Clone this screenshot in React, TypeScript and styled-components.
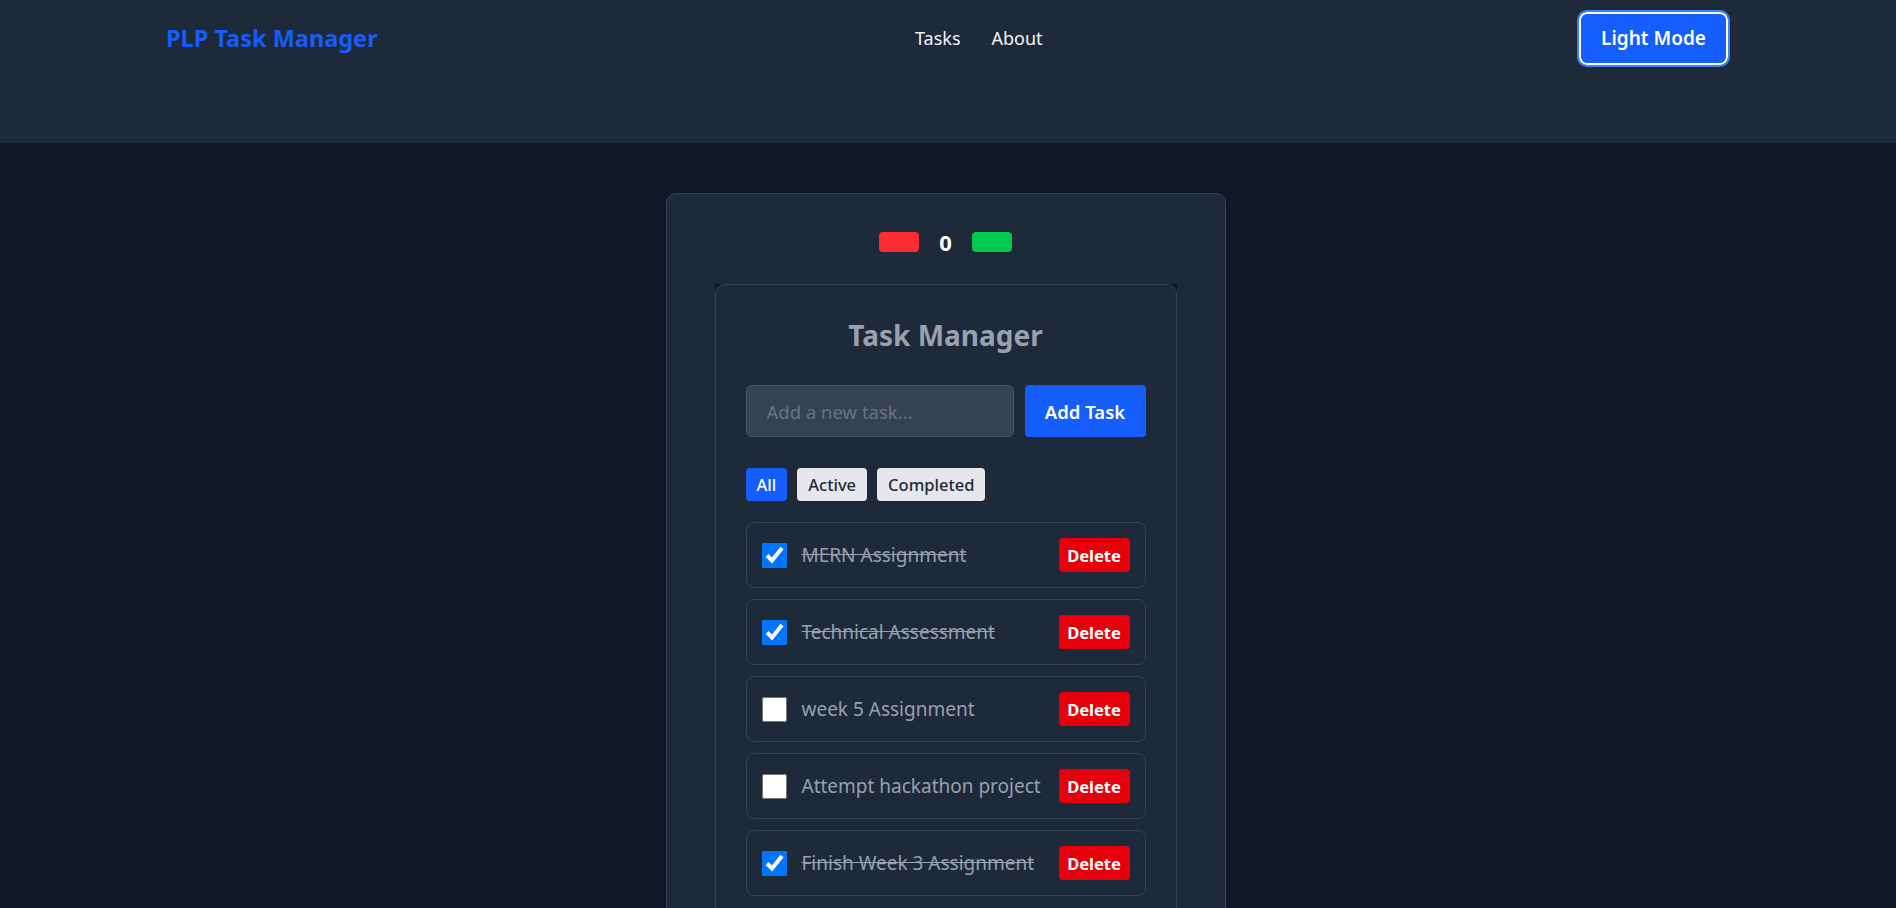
import { useState } from "react";
import styled, { createGlobalStyle } from "styled-components";

const GlobalStyle = createGlobalStyle`
	body {
		margin: 0;
		background: #101828;
		font-family: "Segoe UI", "Noto Sans", "Open Sans", sans-serif;
	}
`;

type Task = { id: number; text: string; done: boolean };

const initialTasks: Task[] = [
	{ id: 1, text: "MERN Assignment", done: true },
	{ id: 2, text: "Technical Assessment", done: true },
	{ id: 3, text: "week 5 Assignment", done: false },
	{ id: 4, text: "Attempt hackathon project", done: false },
	{ id: 5, text: "Finish Week 3 Assignment", done: true }
];

const App = () => {
	const [tasks, setTasks] = useState(initialTasks);
	const [count, setCount] = useState(0);
	const [filter, setFilter] = useState("All");
	const [draft, setDraft] = useState("");

	const shown = tasks.filter((t) => (filter === "All" ? true : filter === "Active" ? !t.done : t.done));

	const addTask = () => {
		if (!draft.trim()) return;
		setTasks([...tasks, { id: Date.now(), text: draft.trim(), done: false }]);
		setDraft("");
	};

	return (
		<>
			<GlobalStyle />
			<Header>
				<HeaderRow>
					<Logo>PLP Task Manager</Logo>
					<Nav>
						<NavLink href="#">Tasks</NavLink>
						<NavLink href="#">About</NavLink>
					</Nav>
					<ModeButton>Light Mode</ModeButton>
				</HeaderRow>
			</Header>

			<Main>
				<OuterCard>
					<Counter>
						<CountButton $color="#fb2c36" onClick={() => setCount(count - 1)} />
						<CountValue>{count}</CountValue>
						<CountButton $color="#00c950" onClick={() => setCount(count + 1)} />
					</Counter>

					<CardBackdrop>
						<InnerCard>
							<Title>Task Manager</Title>
							<AddRow>
								<TaskInput
									placeholder="Add a new task..."
									value={draft}
									onChange={(e) => setDraft(e.target.value)}
								/>
								<AddButton onClick={addTask}>Add Task</AddButton>
							</AddRow>

							<Filters>
								{["All", "Active", "Completed"].map((f) => (
									<FilterButton key={f} $active={filter === f} onClick={() => setFilter(f)}>
										{f}
									</FilterButton>
								))}
							</Filters>

							<TaskList>
								{shown.map((t) => (
									<TaskRow key={t.id}>
										<Check
											type="checkbox"
											checked={t.done}
											onChange={() =>
												setTasks(tasks.map((x) => (x.id === t.id ? { ...x, done: !x.done } : x)))
											}
										/>
										<TaskText $done={t.done}>{t.text}</TaskText>
										<DeleteButton onClick={() => setTasks(tasks.filter((x) => x.id !== t.id))}>
											Delete
										</DeleteButton>
									</TaskRow>
								))}
							</TaskList>
						</InnerCard>
					</CardBackdrop>
				</OuterCard>
			</Main>
		</>
	);
};

const Header = styled.header`
	background: #1e2939;
	height: 143px;
	box-sizing: border-box;
	padding: 0 166px;
`;

const HeaderRow = styled.div`
	height: 76px;
	display: flex;
	align-items: center;
`;

const Logo = styled.div`
	flex: 0 0 749px;
	color: #155dfc;
	font-size: 23.5px;
	font-weight: 700;
`;

const Nav = styled.nav`
	display: flex;
	gap: 31px;
`;

const NavLink = styled.a`
	color: #f3f4f6;
	font-size: 18px;
	text-decoration: none;
`;

const ModeButton = styled.button`
	margin-left: auto;
	margin-right: 2px;
	background: #155dfc;
	color: #fff;
	font-family: inherit;
	font-size: 19px;
	font-weight: 600;
	width: 149px;
	height: 53px;
	border: 2px solid #fff;
	border-radius: 8px;
	outline: 2px solid #3b82f6;
	cursor: pointer;
`;

const Main = styled.main`
	display: flex;
	justify-content: center;
	padding: 50px 5px 0 0;
	min-height: 800px;
`;

const OuterCard = styled.div`
	width: 560px;
	box-sizing: border-box;
	background: #1e2939;
	border: 1px solid #364153;
	border-radius: 10px;
	padding: 34px 48px 48px;
	align-self: flex-start;
`;

const Counter = styled.div`
	display: flex;
	align-items: center;
	justify-content: center;
	gap: 20px;
	height: 28px;
	margin-bottom: 28px;
`;

const CountButton = styled.button<{ $color: string }>`
	width: 40px;
	height: 20px;
	border: none;
	border-radius: 4px;
	background: ${(p) => p.$color};
	cursor: pointer;
`;

const CountValue = styled.span`
	color: #fff;
	font-size: 22px;
	font-weight: 700;
`;

const CardBackdrop = styled.div`
	background: #101828;
`;

const InnerCard = styled.div`
	background: #1e2939;
	border: 1px solid #364153;
	border-radius: 10px;
	padding: 30px 30px 30px;
`;

const Title = styled.h2`
	margin: 0 0 30px;
	text-align: center;
	color: #99a1af;
	font-size: 28px;
	font-weight: 700;
	line-height: 40px;
`;

const AddRow = styled.div`
	display: flex;
	gap: 11px;
	margin-bottom: 31px;
`;

const TaskInput = styled.input`
	flex: 1;
	min-width: 0;
	height: 52px;
	box-sizing: border-box;
	background: #364153;
	border: 1px solid #4a5565;
	border-radius: 6px;
	padding: 0 20px;
	color: #e5e7eb;
	font-family: inherit;
	font-size: 18.5px;

	&::placeholder {
		color: #6a7282;
	}
`;

const AddButton = styled.button`
	width: 121px;
	height: 52px;
	background: #155dfc;
	border: none;
	border-radius: 4px;
	color: #fff;
	font-family: inherit;
	font-size: 18.5px;
	font-weight: 600;
	cursor: pointer;
`;

const Filters = styled.div`
	display: flex;
	gap: 10px;
	margin-bottom: 21px;
`;

const FilterButton = styled.button<{ $active: boolean }>`
	height: 33px;
	padding: 0 11px;
	border: none;
	border-radius: 4px;
	background: ${(p) => (p.$active ? "#155dfc" : "#e5e7eb")};
	color: ${(p) => (p.$active ? "#fff" : "#1e2939")};
	font-family: inherit;
	font-size: 16.5px;
	font-weight: 500;
	cursor: pointer;
`;

const TaskList = styled.ul`
	list-style: none;
	margin: 0;
	padding: 0;
	display: flex;
	flex-direction: column;
	gap: 11px;
`;

const TaskRow = styled.li`
	display: flex;
	align-items: center;
	gap: 15px;
	height: 66px;
	box-sizing: border-box;
	padding: 0 15px;
	border: 1px solid #364153;
	border-radius: 8px;
`;

const Check = styled.input`
	width: 25px;
	height: 25px;
	margin: 0;
	flex-shrink: 0;
`;

const TaskText = styled.span<{ $done: boolean }>`
	flex: 1;
	color: #99a1af;
	font-size: 19px;
	text-decoration: ${(p) => (p.$done ? "line-through" : "none")};
`;

const DeleteButton = styled.button`
	width: 71px;
	height: 34px;
	background: #e7000b;
	border: none;
	border-radius: 4px;
	color: #fff;
	font-family: inherit;
	font-size: 16.5px;
	font-weight: 700;
	cursor: pointer;
`;

export default App;
